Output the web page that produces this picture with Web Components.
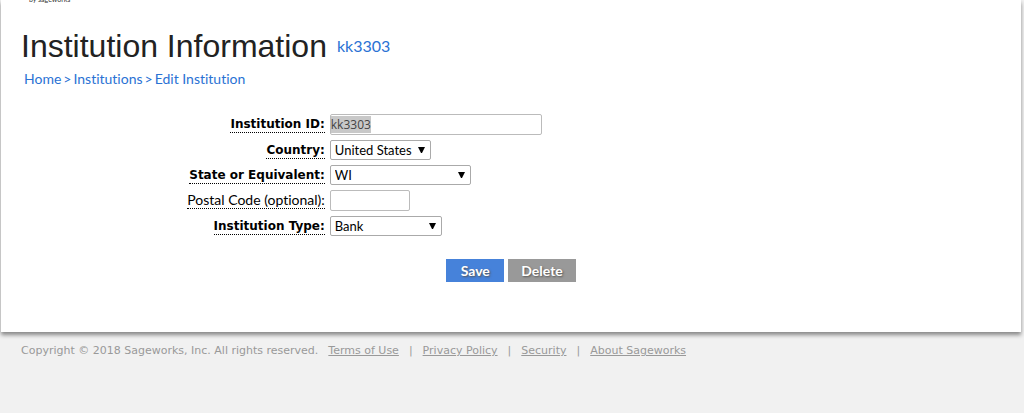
<!DOCTYPE html>
<html lang="en">
<head>
<meta charset="utf-8">
<meta name="viewport" content="width=device-width, initial-scale=1">
<title>Institution Information</title>
<style>
  :root {
    --font-body: Lato, "Open Sans", sans-serif;
    --font-label: "DejaVu Sans", Verdana, sans-serif;
    --font-title: "Liberation Sans", Arial, sans-serif;
    --link: #2a72d4;
    --primary: #4682da;
    --neutral: #999;
    --muted: #999;
  }
  body {
    margin: 0;
    background: #f1f1f1;
    font-family: var(--font-body);
    font-size: 14px;
    font-variant-ligatures: none;
    color: #000;
  }
</style>
</head>
<body>
<page-panel>
  <site-tagline>by sageworks</site-tagline>
  <page-title code="kk3303">Institution Information</page-title>
  <bread-crumbs>
    <crumb-link>Home</crumb-link>
    <crumb-link>Institutions</crumb-link>
    <crumb-link>Edit Institution</crumb-link>
  </bread-crumbs>
  <field-list>
    <text-field label="Institution ID:" value="kk3303" size="long" required selected></text-field>
    <select-field label="Country:" value="United States" size="medium" required></select-field>
    <select-field label="State or Equivalent:" value="WI" size="wide" required></select-field>
    <text-field label="Postal Code (optional):" size="short"></text-field>
    <select-field label="Institution Type:" value="Bank" size="normal" required></select-field>
  </field-list>
  <button-bar>
    <action-button kind="primary">Save</action-button>
    <action-button>Delete</action-button>
  </button-bar>
</page-panel>
<site-footer>Copyright © 2018 Sageworks, Inc. All rights reserved.</site-footer>

<script>
(function () {
  function define(name, html, setup) {
    const template = document.createElement('template');
    template.innerHTML = html;
    customElements.define(name, class extends HTMLElement {
      constructor() {
        super();
        this.attachShadow({ mode: 'open' });
        this.shadowRoot.appendChild(template.content.cloneNode(true));
      }
      connectedCallback() {
        if (setup) setup(this, this.shadowRoot);
      }
    });
  }

  define('page-panel', `
    <style>
      :host {
        display: block;
        margin: 0 3px 0 1px;
        padding: 0 20px 50px;
        background: #fff;
        box-shadow: 0 3px 4px #888;
      }
    </style>
    <slot></slot>
  `);

  // only the bottom of the tagline shows under the top edge of the window
  define('site-tagline', `
    <style>
      :host {
        display: flex;
        align-items: flex-end;
        height: 4px;
        padding-left: 8px;
        overflow: hidden;
        font-size: 7px;
        line-height: 10px;
        color: #333;
      }
    </style>
    <slot></slot>
  `);

  define('page-title', `
    <style>
      :host {
        display: flex;
        align-items: center;
        gap: 10px;
        padding-top: 24px;
      }
      h1 {
        margin: 0;
        font: 32px/36px var(--font-title);
        color: #222;
      }
      a {
        font-size: 16px;
        line-height: 20px;
        color: var(--link);
        text-decoration: none;
      }
    </style>
    <h1><slot></slot></h1>
    <a href="#"></a>
  `, (host, root) => {
    root.querySelector('a').textContent = host.getAttribute('code');
  });

  define('bread-crumbs', `
    <style>
      nav {
        display: flex;
        padding: 6px 3px 0;
        line-height: 18px;
        color: var(--link);
      }
      ::slotted(:not(:first-child))::before {
        content: ">";
        padding: 0 2px;
      }
    </style>
    <nav aria-label="Breadcrumb"><slot></slot></nav>
  `);

  define('crumb-link', `
    <style>
      :host { display: flex; }
      a { color: inherit; text-decoration: none; }
    </style>
    <a href="#"><slot></slot></a>
  `);

  define('field-list', `
    <style>
      :host {
        display: grid;
        row-gap: 5px;
        padding-top: 26px;
      }
    </style>
    <slot></slot>
  `);

  const fieldStyle = `
    <style>
      :host {
        display: grid;
        grid-template-columns: 31% minmax(0, 1fr);
        column-gap: 5px;
        align-items: center;
      }
      label {
        justify-self: end;
        border-bottom: 1px dotted #000;
        font-size: 14px;
        line-height: 16px;
      }
      :host([required]) label {
        font: bold 12px/16px var(--font-label);
      }
      input, select {
        box-sizing: border-box;
        width: 100%;
        margin: 0;
        border: 1px solid #aaa;
        border-radius: 2px;
        background: #fff;
        color: #000;
        outline: none;
      }
      .box {
        display: grid;
        align-items: center;
      }
      :host([size="short"]) .box { width: 80px; }
      :host([size="medium"]) .box { width: 101px; }
      :host([size="normal"]) .box { width: 112px; }
      :host([size="wide"]) .box { width: 141px; }
      :host([size="long"]) .box { width: 212px; }
    </style>
  `;

  define('text-field', fieldStyle + `
    <style>
      input {
        height: 21px;
        padding: 0;
        border-color: #bbb;
        font: 12px "Open Sans", sans-serif;
        color: #444;
      }
      input::selection {
        background: #c8c8c8;
        color: #444;
      }
    </style>
    <label for="control"></label>
    <div class="box"><input id="control" type="text"></div>
  `, (host, root) => {
    const input = root.querySelector('input');
    root.querySelector('label').textContent = host.getAttribute('label');
    input.value = host.getAttribute('value') || '';
    if (host.hasAttribute('selected')) {
      input.focus();
      input.select();
    }
  });

  define('select-field', fieldStyle + `
    <style>
      select {
        grid-area: 1 / 1;
        appearance: none;
        height: 20px;
        padding: 0 16px 0 4px;
        font: 13px var(--font-body);
      }
      svg {
        grid-area: 1 / 1;
        justify-self: end;
        margin-right: 6px;
        pointer-events: none;
      }
    </style>
    <label for="control"></label>
    <div class="box">
      <select id="control"><option></option></select>
      <svg width="7" height="6" viewBox="0 0 7 6" aria-hidden="true"><path d="M0 0h7L4 6H3z"/></svg>
    </div>
  `, (host, root) => {
    root.querySelector('label').textContent = host.getAttribute('label');
    root.querySelector('option').textContent = host.getAttribute('value');
  });

  define('button-bar', `
    <style>
      :host {
        display: flex;
        justify-content: center;
        gap: 4px;
        padding-top: 23px;
      }
    </style>
    <slot></slot>
  `);

  define('action-button', `
    <style>
      :host { display: block; }
      button {
        display: block;
        min-width: 58px;
        height: 23px;
        margin: 0;
        padding: 0 13px;
        border: 0;
        background: var(--neutral);
        color: #fff;
        font: bold 14px var(--font-body);
        text-shadow: 1px 1px 2px #555;
      }
      :host([kind="primary"]) button { background: var(--primary); }
    </style>
    <button type="button"><slot></slot></button>
  `);

  define('site-footer', `
    <style>
      :host {
        display: flex;
        flex-wrap: wrap;
        padding: 11px 21px;
        font: 11px/16px var(--font-label);
        color: var(--muted);
      }
      nav {
        display: flex;
        padding-left: 10px;
      }
      a { color: inherit; }
      span { padding: 0 10px; }
    </style>
    <slot></slot>
    <nav>
      <a href="#">Terms of Use</a><span>|</span>
      <a href="#">Privacy Policy</a><span>|</span>
      <a href="#">Security</a><span>|</span>
      <a href="#">About Sageworks</a>
    </nav>
  `);
})();
</script>
</body>
</html>
